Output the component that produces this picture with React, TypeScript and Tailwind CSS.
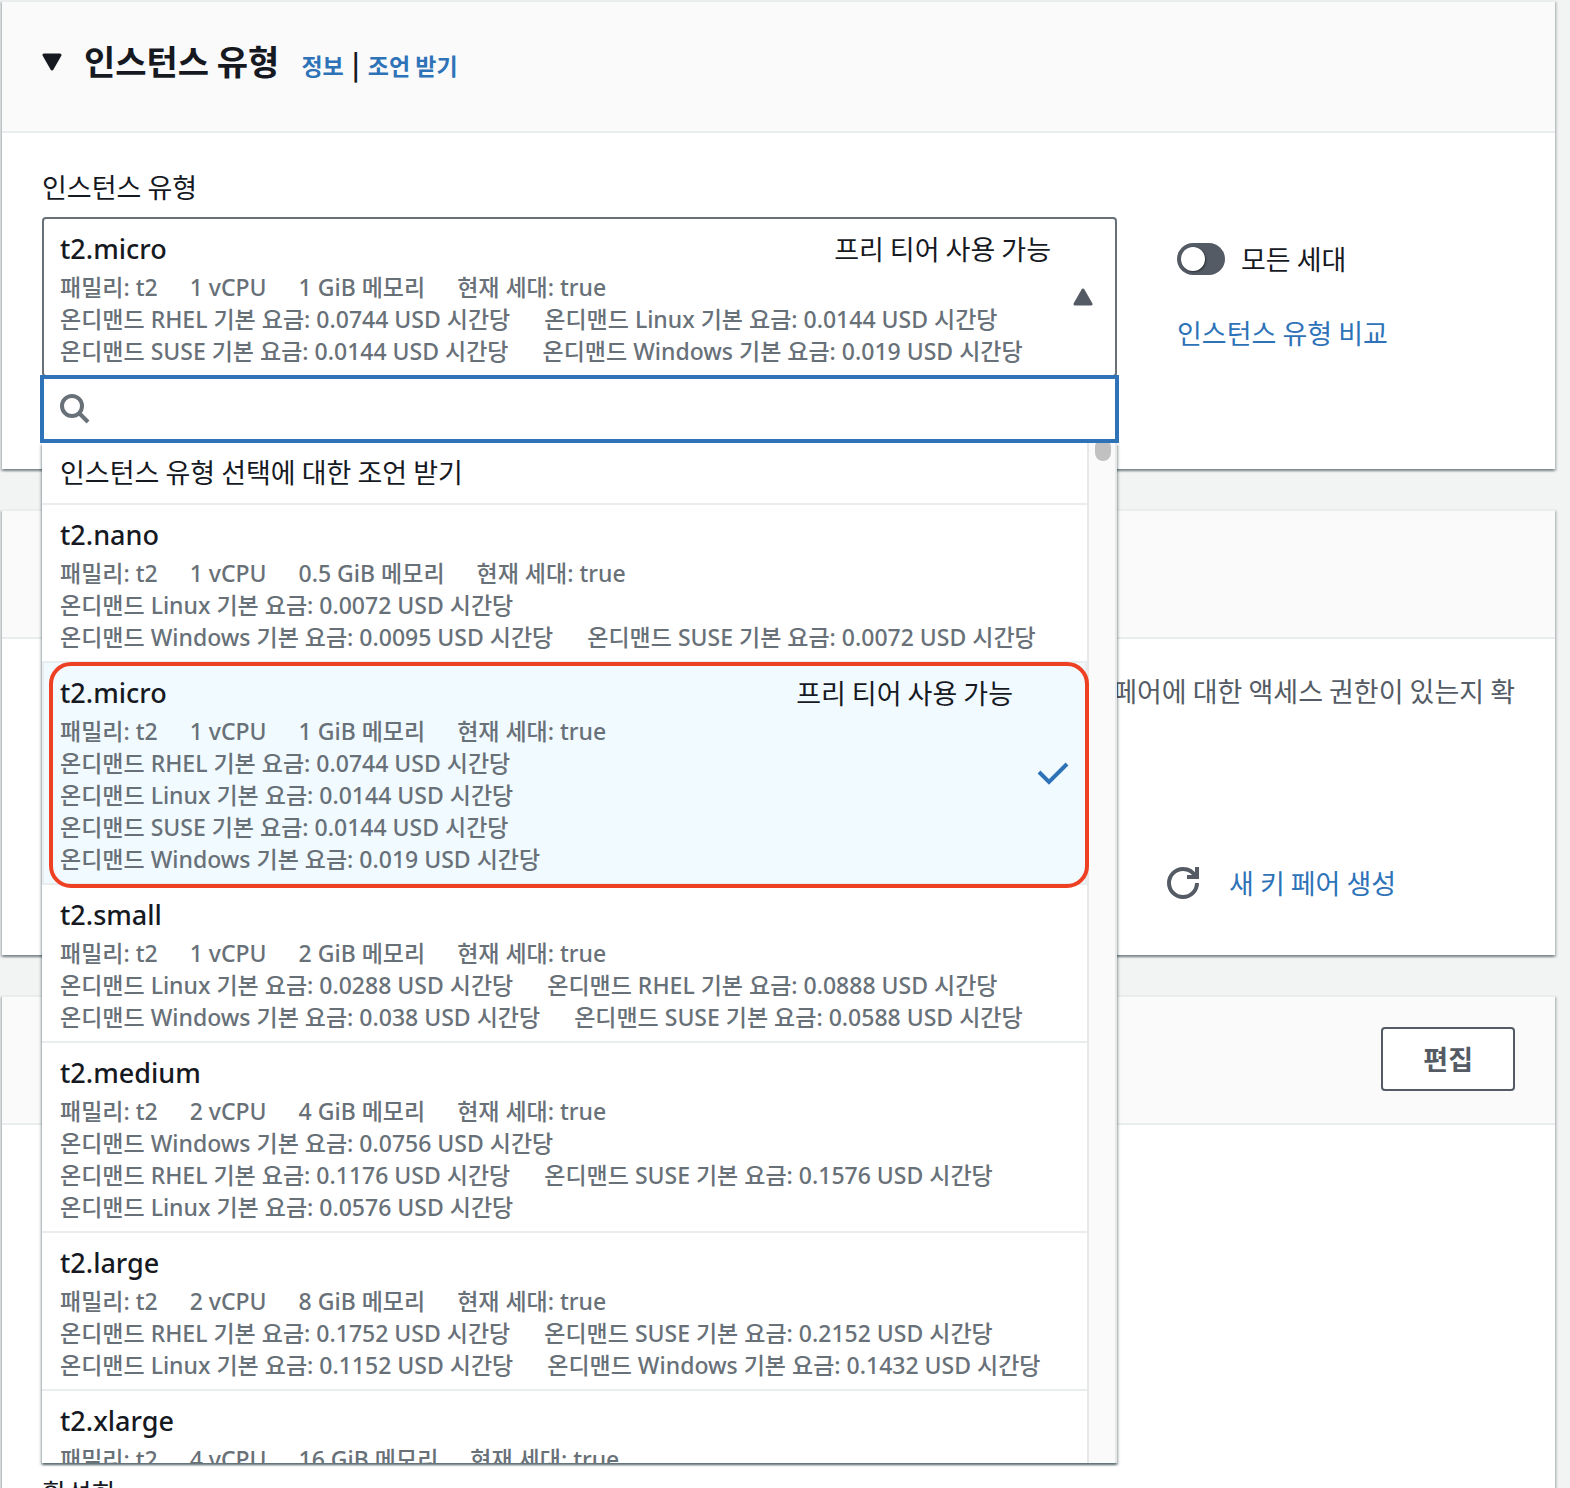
import { useState } from "react";
import type { ReactNode } from "react";

type InstanceType = {
  name: string;
  vcpu: number;
  memory: string;
  freeTier?: boolean;
  prices: [os: string, price: string][][];
};

const selectedType: InstanceType = {
  name: "t2.micro",
  vcpu: 1,
  memory: "1",
  freeTier: true,
  prices: [
    [["RHEL", "0.0744"], ["Linux", "0.0144"]],
    [["SUSE", "0.0144"], ["Windows", "0.019"]],
  ],
};

const instanceTypes: InstanceType[] = [
  {
    name: "t2.nano",
    vcpu: 1,
    memory: "0.5",
    prices: [[["Linux", "0.0072"]], [["Windows", "0.0095"], ["SUSE", "0.0072"]]],
  },
  {
    name: "t2.micro",
    vcpu: 1,
    memory: "1",
    freeTier: true,
    prices: [[["RHEL", "0.0744"]], [["Linux", "0.0144"]], [["SUSE", "0.0144"]], [["Windows", "0.019"]]],
  },
  {
    name: "t2.small",
    vcpu: 1,
    memory: "2",
    prices: [
      [["Linux", "0.0288"], ["RHEL", "0.0888"]],
      [["Windows", "0.038"], ["SUSE", "0.0588"]],
    ],
  },
  {
    name: "t2.medium",
    vcpu: 2,
    memory: "4",
    prices: [[["Windows", "0.0756"]], [["RHEL", "0.1176"], ["SUSE", "0.1576"]], [["Linux", "0.0576"]]],
  },
  {
    name: "t2.large",
    vcpu: 2,
    memory: "8",
    prices: [
      [["RHEL", "0.1752"], ["SUSE", "0.2152"]],
      [["Linux", "0.1152"], ["Windows", "0.1432"]],
    ],
  },
  {
    name: "t2.xlarge",
    vcpu: 4,
    memory: "16",
    prices: [],
  },
];

function TypeDetails({ type }: { type: InstanceType }) {
  return (
    <span className="block min-w-0 flex-1">
      <span className="flex justify-between text-[27px] leading-[44px] text-[#16191f]">
        <span className="font-['Noto_Sans','Noto_Sans_CJK_KR',sans-serif] font-medium">{type.name}</span>
        {type.freeTier && <span>프리 티어 사용 가능</span>}
      </span>
      <span className="block font-['Noto_Sans','Noto_Sans_CJK_KR',sans-serif] text-[23px] leading-8 font-medium whitespace-nowrap text-[#687078]">
        <span className="flex gap-8">
          <span>패밀리: t2</span>
          <span>{type.vcpu} vCPU</span>
          <span>{type.memory} GiB 메모리</span>
          <span>현재 세대: true</span>
        </span>
        {type.prices.map((row, i) => (
          <span key={i} className="flex gap-[34px]">
            {row.map(([os, price]) => (
              <span key={os}>
                온디맨드 {os} 기본 요금: {price} USD 시간당
              </span>
            ))}
          </span>
        ))}
      </span>
    </span>
  );
}

function Card({ header, children, grow }: { header?: ReactNode; children: ReactNode; grow?: boolean }) {
  return (
    <section
      className={`shrink-0 border-t-2 border-[#eaeded] bg-white shadow-[0_2px_2px_rgba(0,28,36,0.3),2px_2px_2px_rgba(0,28,36,0.15),-2px_2px_2px_rgba(0,28,36,0.15)] ${grow ? "flex-1" : ""}`}
    >
      <div className="flex min-h-32 items-center border-b-2 border-[#eaeded] bg-[#fafafa] px-10">{header}</div>
      {children}
    </section>
  );
}

function InstanceSelect() {
  const [query, setQuery] = useState("");
  return (
    <div className="relative z-10">
      <button
        type="button"
        id="instance-type"
        aria-haspopup="listbox"
        aria-expanded="true"
        className="flex w-full items-center rounded-sm border-2 border-[#687078] bg-white py-2 pr-[22px] pl-4 text-left"
      >
        <TypeDetails type={selectedType} />
        <svg aria-hidden="true" viewBox="0 0 20 18" className="ml-[22px] h-[18px] w-5">
          <path d="M10 2 18 16H2Z" fill="#545b64" stroke="#545b64" strokeWidth="3" strokeLinejoin="round" />
        </svg>
      </button>

      <div className="absolute -inset-x-[2px] top-full -mt-[2px]">
        <label className="relative z-10 flex h-[68px] items-center gap-3 border-4 border-[#2e73b8] bg-white px-4">
          <svg aria-hidden="true" viewBox="0 0 30 30" className="size-[30px]" fill="none" stroke="#687078" strokeWidth="4">
            <circle cx="12" cy="12" r="10" />
            <path d="m19 19 9 9" />
          </svg>
          <input
            type="search"
            aria-label="인스턴스 유형 검색"
            value={query}
            onChange={(e) => setQuery(e.target.value)}
            className="min-w-0 flex-1 outline-none"
          />
        </label>

        <div className="mx-[2px] shadow-[0_2px_2px_rgba(0,28,36,0.5),2px_2px_2px_rgba(0,28,36,0.15),-2px_2px_2px_rgba(0,28,36,0.15)]">
          <div className="flex max-h-[1020px] overflow-hidden bg-white">
            <ul role="listbox" aria-labelledby="instance-type-label" className="min-w-0 flex-1">
              <li role="option" aria-selected="false" className="px-[18px] leading-[58px] pb-[2px]">
                인스턴스 유형 선택에 대한 조언 받기
              </li>
              {instanceTypes.map((type) =>
                type.freeTier ? (
                  <li
                    key={type.name}
                    role="option"
                    aria-selected="true"
                    className="relative flex items-center border-x-2 border-t-2 border-[#eaeded] bg-[#f1faff] px-4 py-2"
                  >
                    <TypeDetails type={type} />
                    <svg aria-hidden="true" viewBox="0 0 32 24" className="ml-6 h-6 w-8" fill="none" stroke="#2e73b8" strokeWidth="4">
                      <path d="m2 11 10 10L30 3" />
                    </svg>
                    <span className="pointer-events-none absolute -top-[1px] -right-1 -bottom-[5px] left-[5px] z-10 rounded-[22px] border-4 border-[#ee4023]" />
                  </li>
                ) : (
                  <li key={type.name} role="option" aria-selected="false" className="flex border-t-2 border-[#eaeded] px-[18px] py-2">
                    <TypeDetails type={type} />
                  </li>
                ),
              )}
            </ul>
            <div className="w-[30px] shrink-0 border-x-2 border-[#e8e8e8] bg-[#fafafa]">
              <div className="-mt-1 ml-1.5 h-[22px] w-4 rounded-full bg-[#c1c1c1]" />
            </div>
          </div>
        </div>
      </div>
    </div>
  );
}

export default function App() {
  const [allGenerations, setAllGenerations] = useState(false);
  return (
    <main className="flex h-screen flex-col gap-10 overflow-hidden bg-[#f2f3f3] pr-[15px] pl-[2px] font-['Noto_Sans_CJK_KR','Noto_Sans',sans-serif] text-[27px] leading-[44px] text-[#16191f]">
      <Card
        header={
          <div className="flex h-[129px] items-center pb-2">
            <div className="flex items-baseline">
              <button type="button" className="flex items-baseline" aria-expanded="true">
                <svg aria-hidden="true" viewBox="0 0 20 18" className="mr-[22px] h-[18px] w-5 -translate-y-1">
                  <path d="M2 2h16l-8 14Z" fill="#16191f" stroke="#16191f" strokeWidth="3" strokeLinejoin="round" />
                </svg>
                <h2 className="text-[34px] font-bold">인스턴스 유형</h2>
              </button>
              <a href="#info" className="ml-[22px] text-[23px] font-bold text-[#2e73b8]">정보</a>
              <span className="mx-2 font-bold">|</span>
              <a href="#advice" className="text-[23px] font-bold text-[#2e73b8]">조언 받기</a>
            </div>
          </div>
        }
      >
        <div className="grid grid-cols-[minmax(0,1fr)_338px] gap-x-[60px] px-10 pt-8 pb-[92px]">
          <div>
            <label id="instance-type-label" htmlFor="instance-type" className="mb-2 block">
              인스턴스 유형
            </label>
            <InstanceSelect />
          </div>
          <div className="pt-[72px]">
            <label className="flex items-center gap-4">
              <input
                type="checkbox"
                role="switch"
                checked={allGenerations}
                onChange={(e) => setAllGenerations(e.target.checked)}
                className="peer sr-only"
              />
              <span className="flex h-8 w-12 items-center rounded-full bg-[#545b64] px-1 peer-checked:justify-end peer-checked:bg-[#2e73b8]">
                <span className="size-6 rounded-full bg-white shadow-[1px_1px_2px_rgba(0,0,0,0.5)]" />
              </span>
              모든 세대
            </label>
            <a href="#compare" className="mt-[30px] block text-[#2e73b8]">인스턴스 유형 비교</a>
          </div>
        </div>
      </Card>

      <Card>
        <div className="px-10 pt-[30px] pb-[50px]">
          <p className="text-right whitespace-nowrap text-[#545b64]">페어에 대한 액세스 권한이 있는지 확</p>
          <div className="mt-[148px] grid grid-cols-[minmax(0,1fr)_348px]">
            <div className="col-start-2 flex items-center gap-[30px]">
              <button type="button" aria-label="새로 고침">
                <svg aria-hidden="true" viewBox="0 0 16 16" className="size-8" fill="none" stroke="#545b64" strokeWidth="2">
                  <path d="M15 8c0 3.87-3.13 7-7 7s-7-3.13-7-7 3.13-7 7-7c2.79 0 5.2 1.63 6.33 4" />
                  <path d="M10 5h5V0" />
                </svg>
              </button>
              <a href="#new-key-pair" className="text-[#2e73b8]">새 키 페어 생성</a>
            </div>
          </div>
        </div>
      </Card>

      <Card
        grow
        header={
          <button
            type="button"
            className="mb-[2px] ml-auto h-16 rounded-sm border-2 border-[#545b64] bg-white px-10 font-bold text-[#545b64]"
          >
            편집
          </button>
        }
      >
        <div className="px-10 pt-[346px]">
          <p>활성화</p>
        </div>
      </Card>
    </main>
  );
}
